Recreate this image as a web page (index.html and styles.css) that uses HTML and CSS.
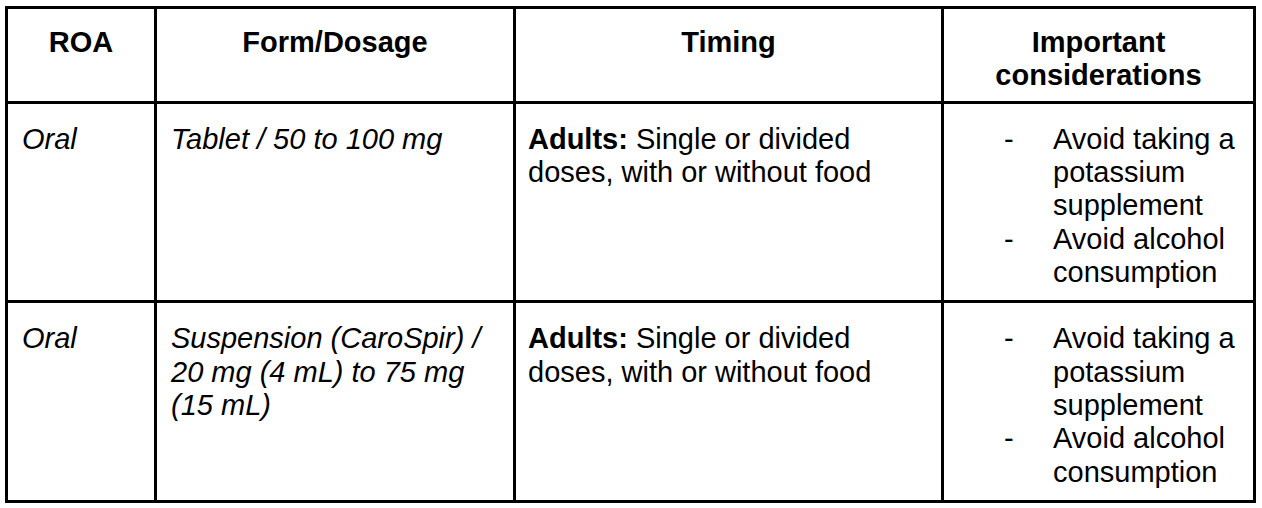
FILE: index.html
```html
<!DOCTYPE html>
<html lang="en">
<head>
<meta charset="utf-8">
<title>Spironolactone administration</title>
<link rel="stylesheet" href="styles.css">
</head>
<body>
<table class="dose-table">
  <colgroup>
    <col class="c-roa">
    <col class="c-form">
    <col class="c-timing">
    <col class="c-notes">
  </colgroup>
  <thead>
    <tr>
      <th>ROA</th>
      <th>Form/Dosage</th>
      <th>Timing</th>
      <th>Important considerations</th>
    </tr>
  </thead>
  <tbody>
    <tr>
      <td class="it">Oral</td>
      <td class="it">Tablet / 50 to 100 mg</td>
      <td class="timing"><span class="who">Adults: </span>Single or divided doses, with or without food</td>
      <td class="notes">
        <ul class="dash-list">
          <li><span class="dash">-</span><span>Avoid taking a potassium supplement</span></li>
          <li><span class="dash">-</span><span>Avoid alcohol consumption</span></li>
        </ul>
      </td>
    </tr>
    <tr>
      <td class="it">Oral</td>
      <td class="it">Suspension (CaroSpir) / 20 mg (4 mL) to 75 mg (15 mL)</td>
      <td class="timing"><span class="who">Adults: </span>Single or divided doses, with or without food</td>
      <td class="notes">
        <ul class="dash-list">
          <li><span class="dash">-</span><span>Avoid taking a potassium supplement</span></li>
          <li><span class="dash">-</span><span>Avoid alcohol consumption</span></li>
        </ul>
      </td>
    </tr>
  </tbody>
</table>
</body>
</html>
```

FILE: styles.css
```css
html, body {
  margin: 0;
  padding: 0;
  background: #ffffff;
}

body {
  padding: 6px 0 0 5px;
  font-family: "Liberation Sans", Arial, sans-serif;
  font-size: 29px;
  line-height: 1.15;
  color: #000000;
}

.dose-table {
  border-collapse: separate;
  border-spacing: 0;
  table-layout: fixed;
  width: 1251px;
  border-top: 3px solid #000;
  border-left: 3px solid #000;
}

.c-roa { width: 149px; }
.c-form { width: 359px; }
.c-timing { width: 428px; }
.c-notes { width: 312px; }

.dose-table th,
.dose-table td {
  border-right: 3px solid #000;
  border-bottom: 3px solid #000;
  vertical-align: top;
  text-align: left;
}

.dose-table th {
  font-weight: bold;
  text-align: center;
  padding: 17px 14px 8px 14px;
}

.dose-table td {
  padding: 19px 14px 11px 14px;
  font-weight: normal;
}

.dose-table td.it {
  font-style: italic;
}

.dose-table td.timing {
  padding-left: 12px;
}

.who {
  font-weight: bold;
}

.dose-table td.notes {
  padding-right: 6px;
}

.dash-list {
  list-style: none;
  margin: 0;
  padding: 0;
}

.dash-list li {
  display: grid;
  grid-template-columns: 95px 1fr;
}

.dash {
  padding-left: 46px;
}
```
